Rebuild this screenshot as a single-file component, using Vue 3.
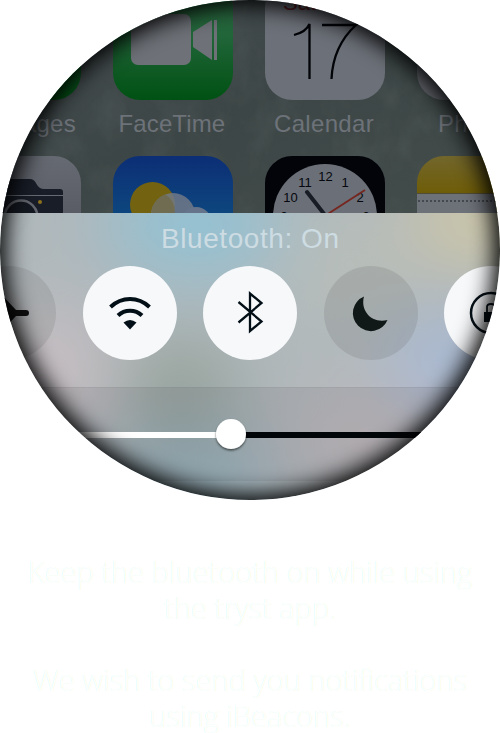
<script setup>
const hours = [
  { n: '12', x: 325.5, y: 180.5 },
  { n: '1', x: 345, y: 186.5 },
  { n: '11', x: 305, y: 186.5 },
  { n: '10', x: 290.5, y: 201.5 },
  { n: '2', x: 360, y: 201.5 },
  { n: '9', x: 284, y: 221 },
  { n: '3', x: 366, y: 221 },
]
</script>

<template>
  <main class="page">
    <div class="lens">
      <svg class="scene" viewBox="0 0 500 500" role="img" aria-label="Control Center with Bluetooth on">
        <defs>
          <linearGradient id="green" x1="0" y1="0" x2="0" y2="1">
            <stop offset="0" stop-color="#316844" />
            <stop offset=".45" stop-color="#22663a" />
            <stop offset="1" stop-color="#005113" />
          </linearGradient>
          <linearGradient id="sky" x1="0" y1="0" x2="0" y2="1">
            <stop offset="0" stop-color="#0c2e75" />
            <stop offset=".5" stop-color="#0d477f" />
            <stop offset="1" stop-color="#0d5c88" />
          </linearGradient>
          <linearGradient id="gold" x1="0" y1="0" x2="0" y2=".33">
            <stop offset="0" stop-color="#72662c" />
            <stop offset="1" stop-color="#6e5c05" />
          </linearGradient>
          <linearGradient id="silver" x1="0" y1="0" x2="0" y2="1">
            <stop offset="0" stop-color="#666a72" />
            <stop offset="1" stop-color="#4c4d57" />
          </linearGradient>
          <linearGradient id="wall" x1="0" y1="0" x2="1" y2="1">
            <stop offset="0" stop-color="#454d51" />
            <stop offset=".5" stop-color="#3d4646" />
            <stop offset="1" stop-color="#434d4b" />
          </linearGradient>
          <filter id="grain" x="0" y="0" width="100%" height="100%">
            <feTurbulence type="fractalNoise" baseFrequency=".04 .03" numOctaves="4" seed="4" />
            <feColorMatrix values="0 0 0 0 .5  0 0 0 0 .6  0 0 0 0 .55  1 0 0 0 -.4" />
          </filter>
          <filter id="soft" x="-30%" y="-30%" width="160%" height="160%">
            <feGaussianBlur stdDeviation="36" />
          </filter>
          <filter id="knob" x="-30%" y="-30%" width="160%" height="170%">
            <feDropShadow dx="0" dy="1.5" stdDeviation="1.2" flood-opacity=".6" />
          </filter>
          <clipPath id="upper"><rect width="500" height="213" /></clipPath>
          <clipPath id="panel"><rect y="213" width="500" height="287" /></clipPath>
        </defs>

        <g clip-path="url(#upper)">
          <rect width="500" height="213" fill="url(#wall)" />
          <rect width="500" height="213" filter="url(#grain)" opacity=".12" />
          <rect x="-39" y="-20" width="120" height="120" rx="27" fill="url(#green)" />
          <rect x="113" y="-20" width="120" height="120" rx="27" fill="url(#green)" />
          <rect x="131" y="14" width="60" height="51" rx="7" fill="#6e7278" />
          <path d="M193 32 212 20V60L193 47ZM214 20h3v40h-3z" fill="#6e7278" />
          <rect x="265" y="-20" width="120" height="120" rx="27" fill="#6c7078" />
          <rect x="417" y="-20" width="120" height="120" rx="27" fill="#65686f" />
          <text class="day" x="283" y="10">Saturday</text>
          <path d="M294 35Q306 32 309.500 24V79M322 25H356Q333 46 331.500 79" fill="none" stroke="#020408" stroke-width="2.300" />
          <g class="label">
            <text x="76" y="132" text-anchor="end">Messages</text>
            <text x="172" y="132" text-anchor="middle" textLength="107">FaceTime</text>
            <text x="324" y="132" text-anchor="middle" textLength="100">Calendar</text>
            <text x="438" y="132">Photos</text>
          </g>
          <rect x="-39" y="156" width="120" height="120" rx="27" fill="url(#silver)" />
          <path d="M-20 179H30Q34 179 36.500 184 39 189 44 189H60Q63 189 63 192V250H-20Z" fill="#181d27" />
          <path d="M-20 195.500H63" stroke="#666a72" />
          <circle cx="21" cy="217" r="16.500" fill="#141820" stroke="#62656d" stroke-width="2.500" />
          <circle cx="40" cy="202" r="2" fill="#8c701d" />
          <rect x="113" y="156" width="120" height="120" rx="27" fill="url(#sky)" />
          <circle cx="152.500" cy="204.500" r="22.500" fill="#736310" />
          <circle cx="173" cy="215" r="22" fill="#727987" opacity=".85" />
          <path d="M152 220A22 22 0 0 1 165 194.500Q175 200 175 213V220Z" fill="#6e6a49" opacity=".8" />
          <circle cx="196" cy="223" r="16" fill="#65748b" />
          <rect x="265" y="156" width="120" height="120" rx="27" fill="#020409" />
          <circle cx="325" cy="216" r="52" fill="#6b6f77" />
          <g class="hour"><text v-for="h in hours" :key="h.n" :x="h.x" :y="h.y">{{ h.n }}</text></g>
          <path d="M307 192 328 219" stroke="#181c24" stroke-width="4" stroke-linecap="round" />
          <path d="M320 219 365 190" stroke="#76261f" stroke-width="1.800" />
          <rect x="417" y="156" width="120" height="120" rx="27" fill="url(#gold)" />
          <rect x="417" y="194" width="83" height="20" fill="#6d7178" />
          <path d="M417 193.500H500" stroke="#504c38" />
          <path d="M418 201H500" stroke="#44484f" stroke-width="2" stroke-dasharray="2 2" />
        </g>

        <g clip-path="url(#panel)">
          <rect y="213" width="500" height="287" fill="#b0b8bb" />
          <g filter="url(#soft)">
            <ellipse cx="195" cy="225" rx="90" ry="48" fill="#90c2d6" />
            <ellipse cx="350" cy="265" rx="70" ry="60" fill="#b7bdb9" />
            <ellipse cx="480" cy="220" rx="70" ry="45" fill="#d0c8a6" />
            <ellipse cx="50" cy="370" rx="50" ry="60" fill="#cbbfc4" />
            <ellipse cx="180" cy="390" rx="55" ry="45" fill="#929e94" />
            <ellipse cx="450" cy="362" rx="60" ry="38" fill="#a6b9dc" />
            <ellipse cx="190" cy="475" rx="90" ry="42" fill="#94b0bb" />
            <ellipse cx="365" cy="440" rx="75" ry="50" fill="#c0b9bc" />
          </g>
          <rect y="387" width="500" height="94" fill="#292030" opacity=".09" />
          <path d="M0 387.500H500" stroke="#777" opacity=".14" />
          <text class="status" x="250" y="248" textLength="178">Bluetooth: On</text>
          <circle cx="9" cy="313" r="47" fill="#555" opacity=".15" />
          <circle cx="130" cy="313" r="47" fill="#f7f8fa" />
          <circle cx="250" cy="313" r="47" fill="#f7f8fa" />
          <circle cx="371" cy="313" r="47" fill="#555" opacity=".16" />
          <circle cx="491" cy="313" r="47" fill="#f7f8fa" />
          <path d="M0 293 16 310H26a3 3 0 0 1 0 6H16L0 333Z" fill="#111" />
          <g fill="none" stroke="#020f16" stroke-width="4">
            <path d="M110.500 307Q119 299 130 299T149.500 307M118 315.500Q123 310.700 130 310.700T142 315.500" />
          </g>
          <path d="M123.500 322.500Q130 317.500 136.500 322.500L130 329.500Z" fill="#020f16" />
          <path d="M238.500 302 261.500 321.500 250 331V293.500L261.500 303 238.500 322.500" fill="none" stroke="#020f16" stroke-width="2.300" />
          <path d="M364 296.500A18 18 0 1 0 387.500 320C372 324 360 311 364 296.500Z" fill="#101918" />
          <circle cx="491" cy="313" r="20" fill="none" stroke="#051018" stroke-width="2.500" />
          <rect x="484" y="312" width="14" height="10" fill="#051018" />
          <path d="M487 312V307Q487 304 491 304T495 307V312" fill="none" stroke="#051018" stroke-width="1.800" />
          <path d="M0 435H231" stroke="#fff" stroke-width="6" />
          <path d="M231 435H500" stroke="#020508" stroke-width="6" />
          <circle cx="231" cy="434" r="15" fill="#fff" filter="url(#knob)" />
        </g>
      </svg>
    </div>
    <div class="copy">
      <p>Keep the bluetooth on while using<br />the tryst app.</p>
      <p>We wish to send you notifications<br />using iBeacons.</p>
    </div>
  </main>
</template>

<style>
body { background: #fff; overflow: hidden; }
</style>

<style scoped>
.page { width: 500px; height: 733px; overflow: hidden; font-family: "Liberation Sans", sans-serif; }
.lens { position: relative; width: 500px; height: 500px; border-radius: 50%; overflow: hidden; }
.lens::after { content: ""; position: absolute; inset: 0; border-radius: 50%; box-shadow: inset 0 0 22px 6px #000; }
.scene { display: block; width: 500px; height: 500px; }
.label { font-size: 24px; fill: #6d7279; letter-spacing: .3px; }
.day { font-size: 22px; fill: #5c1c24; }
.hour { font-size: 13px; text-anchor: middle; fill: #05080e; }
.status { font-size: 28px; text-anchor: middle; fill: #cddce2; }
.copy { padding-top: 54px; text-align: center; color: #fff; font-family: "Open Sans", sans-serif; font-weight: 300; font-size: 29px; line-height: 36px; text-shadow: -.5px 0 #dfffff, .5px 0 #fffddf; white-space: nowrap; }
.copy p { margin: 0 0 36px; }
</style>
